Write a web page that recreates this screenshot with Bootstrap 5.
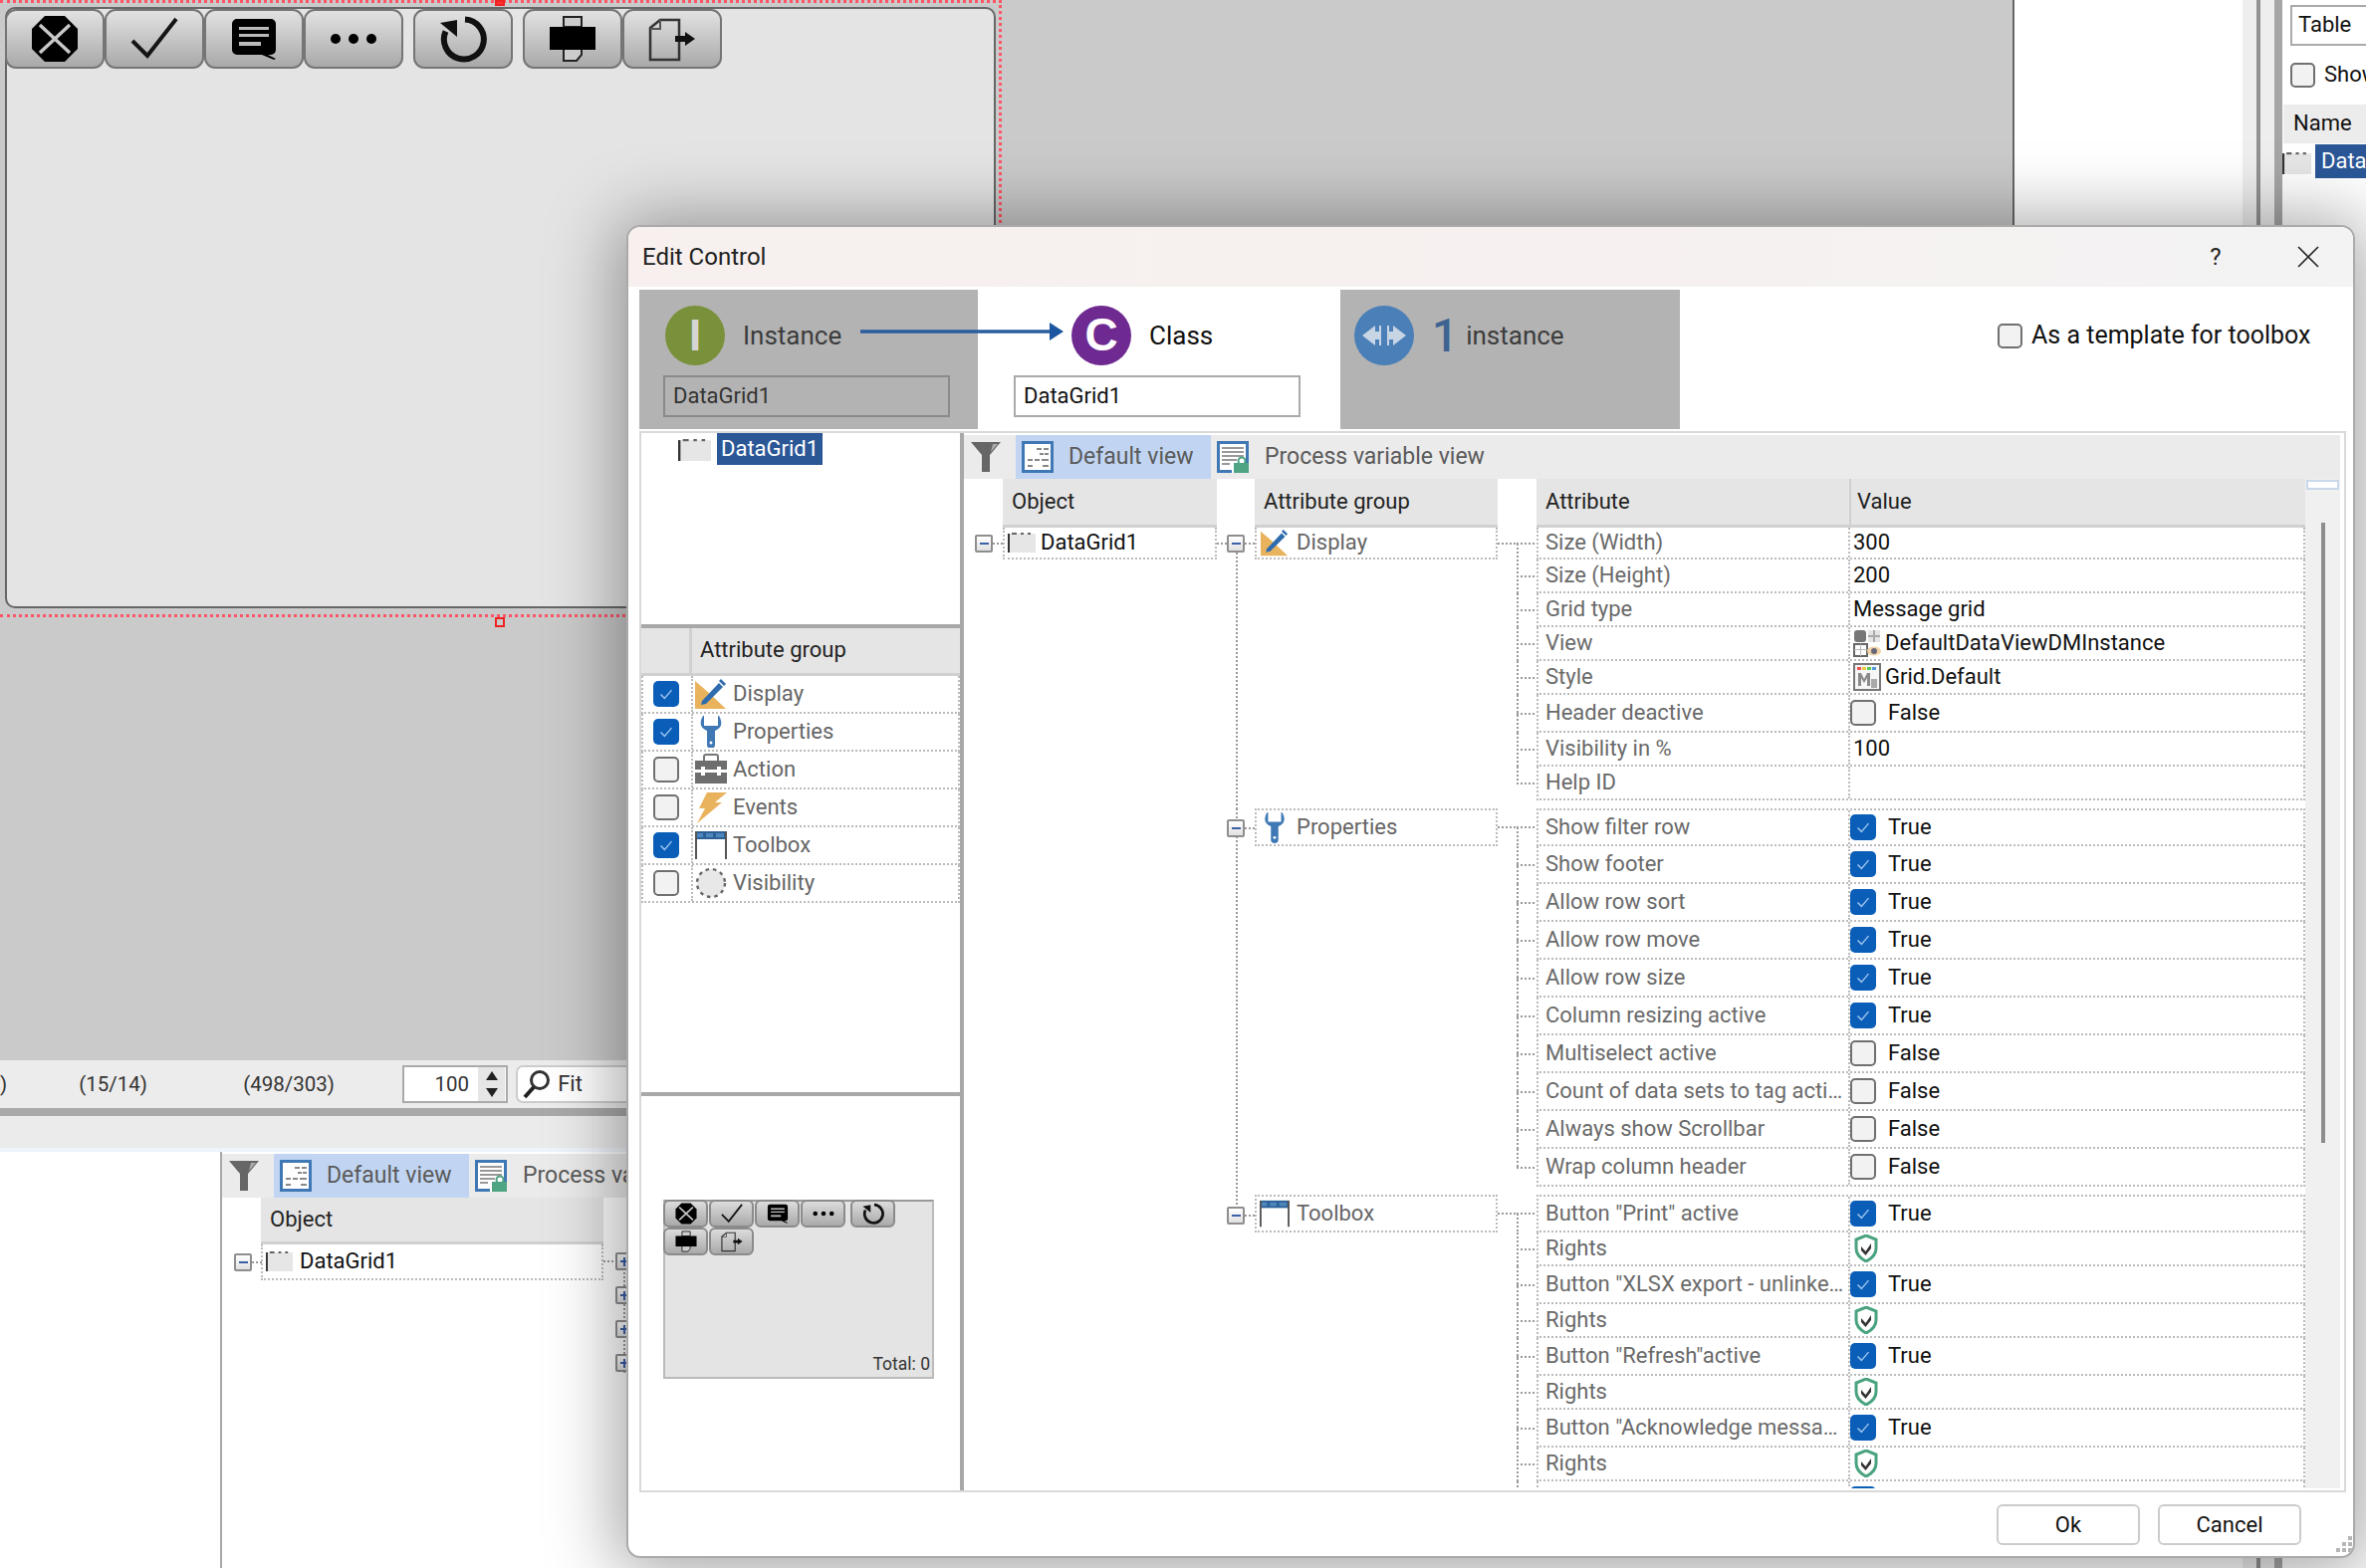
<!doctype html>
<html lang="en"><head><meta charset="utf-8"><title>Edit Control</title>
<link href="https://cdn.jsdelivr.net/npm/bootstrap@5.3.0/dist/css/bootstrap.min.css" rel="stylesheet">
<style>
html,body{margin:0;height:1575px;overflow:hidden;background:#fff}
body{width:2376px;font-family:Roboto,"Liberation Sans",sans-serif;font-size:22px;color:#111;line-height:1.2}
svg{display:block;flex:none}
.app-shell{height:1575px}
.left-stack{width:2252px;flex:none}
.top-area{height:1065px;flex:none}
.canvas-area{width:2023px;background:#cacaca;border-right:2px solid #666;flex:none}
.mid-pane{flex:1;background:#fff}
.sel-frame{width:1006px;height:620px;padding:4px 3px 6px 5px;border-top:3px dotted #f56;border-right:3px dotted #f56;border-bottom:3px dotted #f56;position:relative}
.handle{position:absolute;width:10px;height:10px;border:2px solid #e22;left:497px}
.handle-top{top:-3px;background:#f33;height:6px}.handle-bottom{bottom:-13px}
.hmi-grid{height:100%;background:#e4e4e4;border:2px solid #666;border-radius:10px}
.tbar-row{margin-left:-2px}
.tbar-btn{width:100px;height:60px;border:2px solid #757575;border-radius:11px;background:linear-gradient(#e2e2e2,#a9a9a9);display:flex;align-items:center;justify-content:center}
.tbar-btn.gap-left{margin-left:10px}
.mini-btn{width:45px;height:28px;border:2px solid #8b8b8b;border-radius:6px;background:linear-gradient(#dcdcdc,#a9a9a9);display:flex;align-items:center;justify-content:center}
.grip-pane{width:40px;flex:none;display:flex}
.grip-a{width:14px;background:#eee}.grip-line{width:4px;background:#929292}.grip-b{width:14px;background:#eee}.grip-c{width:8px;background:#a6a6a6}
.side-pane{flex:1;background:#fff;overflow:hidden;padding:5px 0 0 0;white-space:nowrap}
.table-field{margin-left:8px;height:41px;width:200px;border:2px solid #aaa;padding:0 6px;display:flex;align-items:center}
.show-row{margin:17px 0 0 8px;height:25px;gap:9px}
.win-check{width:25px;height:25px;border:2px solid #707070;border-radius:5px;background:#f2f2f2;flex:none}
.side-head{margin:17px 0 0 1px;height:39px;background:#ececec;padding:0 10px;display:flex;align-items:center}
.side-row{height:44px;margin-top:1px}
.side-ic{margin-top:8px}
.sel-text{background:#2b5797;color:#fff;padding:4px 6px}
.status-strip{height:48px;background:#ececec;font-size:20.5px;color:#333;flex:none}
.status-num{width:70px;margin-left:72px}
.status-num2{width:94px;margin-left:95px}
.spin-box{width:106px;height:38px;margin-left:66px;background:#fff;border:2px solid #aaa;justify-content:flex-end}
.spin-btns{width:27px;height:34px;margin-left:9px;margin-right:1px;background:#e6e6e6;display:flex;flex-direction:column;justify-content:space-around;align-items:center}
.fit-btn{width:200px;height:38px;margin-left:8px;background:#fff;border:2px solid #ccc;border-radius:7px;padding-left:4px;gap:6px;font-size:22px}
.dark-bar{height:8px;background:#a9a9a9;flex:none}
.light-strip{height:32px;background:#ebebeb;flex:none}
.blue-line{height:4px;background:#eef4fb;flex:none}
.lower-area{flex:1;background:#fff;min-height:0}
.lower-left{width:221px;flex:none}
.lower-main{flex:1;border-left:2px solid #a8a8a8;padding-top:2px}
.view-bar{height:44px;background:#ebebeb;color:#5a5a5a;font-size:23px;flex:none}
.filter-slot{width:52px;padding-left:7px;flex:none}
.view-active{background:#c1d5f2;width:196px;flex:none}
.view-item{height:100%;padding-left:6px;gap:15px}
.view-plain{padding-left:6px;gap:16px;white-space:nowrap}
.grid-head{background:#e5e5e5;border-bottom:3px solid #d0d0d0;padding-left:9px;display:flex;align-items:center;height:49px;color:#222;flex:none}
.lg-head{width:344px;margin-left:39px;height:47px}
.lg-gut{width:39px;flex:none;padding:9px 0 0 12px;display:flex;align-items:flex-start}
.obj-row{width:344px;height:36px;border:2px dotted #bbb;border-top:0;padding-left:3px;gap:7px;flex:none}
.xbox{width:18px;height:18px;border:2px solid #8e8e8e;border-radius:2px;background:linear-gradient(#fff,#e0e0e0);display:flex;align-items:center;justify-content:center;flex:none;position:relative}
.xbox::before{content:"";width:9px;height:2px;background:#3c5fa8}
.plus-box::after{content:"";position:absolute;width:2px;height:9px;background:#3c5fa8}
.tick{width:10px;height:2px;margin-top:8px;flex:none;background:repeating-linear-gradient(to right,#9a9a9a 0 2px,transparent 2px 4px)}
.lower-boxes{width:32px;padding:8px 0 0 0;flex:none}
.lower-stack{display:flex;flex-direction:column;gap:16px;height:121px;margin-left:2px;background:repeating-linear-gradient(to bottom,#9a9a9a 0 2px,transparent 2px 4px) 8px 0/2px 100% no-repeat}
.dialog-win{position:absolute;left:629px;top:226px;width:1736px;height:1339px;background:#fff;border:2px solid #aaa;border-radius:14px;box-shadow:0 4px 70px 10px rgba(0,0,0,.36);overflow:hidden;display:flex;flex-direction:column}
.dialog-title{height:60px;background:linear-gradient(90deg,#f7f0ee 0,#f6f1f0 60%,#f3f3f3 100%);padding-left:14px;font-size:24px;color:#222;flex:none}
.ctrl-help{width:96px;justify-content:center}
.ctrl-close{width:90px;justify-content:center}
.head-band{height:143px;padding:3px 0 0 11px;flex:none}
.band-tile{width:340px;height:140px;background:#b3b3b3;padding:16px 0 0 26px;flex:none}
.band-class{width:364px;padding:16px 0 0 36px;position:relative;flex:none}
.band-class-top{margin-left:58px}
.band-count{width:341px;height:140px;background:#b3b3b3;padding:16px 0 0 14px;flex:none}
.round-badge{width:60px;height:60px;border-radius:50%;color:#fff;display:flex;align-items:center;justify-content:center;flex:none;font-family:"Liberation Sans",sans-serif;font-weight:700}
.rb-inst{background:#7a913b;color:#d5d5d5;font-size:44px}.rb-class{background:#6f2a91;font-size:46px}.rb-map{background:#4a7fb8}
.band-label{font-size:26px;margin-left:18px;color:#3c3c3c;padding-top:1px}
.band-dark{color:#111}
.band-one{font-size:46px;color:#3d6391;font-weight:500;margin:0 8px 0 18px;line-height:1}
.band-field{width:288px;height:42px;margin:10px 0 0 -2px;border:2px solid #8a8a8a;padding:0 8px;color:#333;display:flex;align-items:center}
.band-field-w{border-color:#aaa;background:#fff;color:#111;margin-left:0}
.band-arrow{position:absolute;left:-118px;top:32px}
.tpl-check{margin-left:319px;margin-top:31px;gap:9px;font-size:25px;color:#111;white-space:nowrap}
.tpl-box{width:25px;height:25px;border:2px solid #707070;border-radius:5px;background:#f2f2f2;flex:none}
.main-frame{height:1066px;margin:2px 7px 0 11px;border:2px solid #d9d9d9;flex:none}
.left-col{width:324px;border-right:4px solid #a8a8a8;flex:none}
.tree-pane{height:192px;padding-left:37px;border-bottom:4px solid #a8a8a8;box-sizing:content-box;flex:none}
.tree-pane .sel-text{margin-left:6px;height:32px;display:flex;align-items:center;padding:0 4px}
.tree-ic{margin-top:6px}
.attr-table{height:466px;border-bottom:4px solid #a8a8a8;box-sizing:content-box;flex:none}
.attr-head{height:48px;background:#e5e5e5;border-bottom:3px solid #d0d0d0;color:#222}
.attr-headcol{width:51px;border-right:3px solid #d0d0d0;height:100%}
.attr-row{height:38px;border:2px dotted #bbb;border-top:0;color:#666}
.attr-cbcell{width:50px;padding-left:10px;border-right:2px dotted #bbb;height:100%}
.attr-cell{gap:6px;padding-left:2px}
.cb-on,.cb-off{width:26px;height:26px;border-radius:5px;flex:none}
.cb-off{border:2px solid #707070;background:#f2f2f2}
.cb-on{background:#0a5eb8;display:flex;align-items:center;justify-content:center}
.preview-wrap{flex:1;padding:104px 0 0 22px}
.preview-box{width:272px;height:180px;background:#e4e4e4;border:2px solid #bbb;border-top-color:#999;position:relative;font-size:17.5px;color:#333}
.preview-row{display:flex;gap:1px;margin-left:-2px}
.preview-row-top{margin-top:-2px}
.preview-total{position:absolute;right:2px;bottom:2px}
.right-col{flex:1;min-width:0;padding-top:2px;overflow:hidden}
.dlg-viewbar{width:1382px}
.tree-grid{height:1014px;overflow:hidden}
.col-gut{width:39px;flex:none}
.head-gap{height:49px}
.col-gut-inner{padding:7px 0 0 11px;display:flex;align-items:flex-start}
.col-obj{width:215px;flex:none}
.cell-w{width:215px!important;gap:5px!important}
.grp-area{flex:none}
.sgroup{display:flex;align-items:stretch}
.gut2{width:38px;flex:none;display:flex;align-items:flex-start;background-image:repeating-linear-gradient(to bottom,#9a9a9a 0 2px,transparent 2px 4px);background-size:2px 100%;background-repeat:no-repeat;background-position:19px 0}
.gut-a{padding-top:7px;background-position:19px 25px}
.gut-b{padding:11px 0 0 10px}
.gut-c{padding:12px 0 0 10px;background-size:2px 12px}
.head-spacer{width:38px;flex:none}
.col-grp{width:244px}
.col-gut3{width:39px;flex:none}
.col-attr{width:314px}
.col-val{width:458px;border-left:2px solid #d0d0d0;padding-left:6px}
.scell{width:244px;height:38px;border:2px dotted #bbb;color:#666;padding-left:3px;gap:7px;flex:none}
.scell-first{height:32px;border-top:0}
.text-dark-cell{color:#111}
.sg-link{width:39px;flex:none;display:flex}
.lk-h{width:19px;flex:none;height:38px;background-image:repeating-linear-gradient(to right,#9a9a9a 0 2px,transparent 2px 4px);background-size:100% 2px;background-repeat:no-repeat;background-position:0 50%}
.lk-h32{height:32px}
.lk-wrap{width:20px;flex:none;display:flex;flex-direction:column}
.lk{flex:none;background-image:repeating-linear-gradient(to right,#9a9a9a 0 2px,transparent 2px 4px),repeating-linear-gradient(to bottom,#9a9a9a 0 2px,transparent 2px 4px);background-size:100% 2px,2px 100%;background-repeat:no-repeat;background-position:0 50%,0 0}
.lk-first{background-size:100% 2px,2px 50%;background-position:0 50%,0 100%}
.lk-last{background-size:100% 2px,2px 50%;background-position:0 50%,0 0}
.h32{height:32px}.h34{height:34px}.h38{height:38px}
.rows{flex:none;width:772px;margin-bottom:8px}
.rows-c{margin-bottom:0}
.prow{display:flex;height:34px;border:2px dotted #bbb;border-top:0;align-items:center;white-space:nowrap}
.prow.r32{height:32px}
.prow.r38{height:38px}
.prow.r-first{border-top:2px dotted #bbb}
.pname{width:313px;flex:none;padding-left:7px;color:#6a6a6a;overflow:hidden;height:100%;display:flex;align-items:center;border-right:2px dotted #bbb}
.pname-clip{display:block;line-height:32px;overflow:hidden;text-overflow:ellipsis;white-space:nowrap}
.pval{flex:1;padding-left:0;display:flex;align-items:center;gap:12px;color:#111;height:100%}
.pval.txt{padding-left:3px;gap:4px}
.pval.shield{padding-left:2px}
.col-scroll{width:35px;flex:none;background:#f0f0f0;margin-left:0;height:1014px}
.thumb-top{height:10px;background:#fff;border:2px solid #c9d8ea;margin:1px 1px 0}
.thumb-line{width:4px;height:623px;background:#8d8d8d;margin:33px 0 0 16px}
.dlg-footer{flex:1;padding:12px 52px 0 0;gap:18px;position:relative}
.dlg-btn{width:144px;height:41px;background:#fff;border:2px solid #ccc;border-radius:6px;color:#111;font-size:22px;padding:0;--bs-btn-hover-bg:#fff}
.size-grip{position:absolute;right:0;bottom:2px}
</style></head><body>
<svg width="0" height="0" style="position:absolute"><defs>
<symbol id="i-x" viewBox="0 0 48 48"><path d="M14 1h20l13 13v20L34 47H14L1 34V14z" fill="#000"/><path d="M9 10l30 28M39 10L9 38" stroke="#c8c8c8" stroke-width="3.500"/></symbol>
<symbol id="i-check" viewBox="0 0 48 48"><path d="M2 26l15 15L46 4" fill="none" stroke="#151515" stroke-width="4"/></symbol>
<symbol id="i-msg" viewBox="0 0 48 48"><path d="M7 4h34a5 5 0 0 1 5 5v26a5 5 0 0 1-5 5h-3l8 4-2 1-12-5H7a5 5 0 0 1-5-5V9a5 5 0 0 1 5-5z" fill="#000"/><path d="M9 12h30v3H9zM9 19h30v3H9zM9 27h22v4H9z" fill="#bbb"/></symbol>
<symbol id="i-dots" viewBox="0 0 48 48"><circle cx="6" cy="24" r="5"/><circle cx="24" cy="24" r="5"/><circle cx="42" cy="24" r="5"/></symbol>
<symbol id="i-refresh" viewBox="0 0 48 48"><path d="M26 4.500a20 20 0 1 1-19.500 12" fill="none" stroke="#111" stroke-width="6"/><path d="M1 8l17-3v17z" fill="#111"/></symbol>
<symbol id="i-print" viewBox="0 0 48 48"><path d="M15 2h18v10H15zM15 33h18v7l-5 6H15z" fill="#ccc" stroke="#222" stroke-width="2"/><path d="M1 12h46v23H1z" fill="#000"/></symbol>
<symbol id="i-export" viewBox="0 0 48 48"><path d="M2 13L12 5h19v40H2z" fill="none" stroke="#333" stroke-width="2.500"/><path d="M12 5v9H2" fill="none" stroke="#555" stroke-width="2"/><path d="M27 21h10v-4l10 7-10 7v-4H27z" fill="#111"/></symbol>
<symbol id="i-table" viewBox="0 0 28 20" preserveAspectRatio="none"><rect x="1" y="1" width="27" height="19" fill="#e6e6e6"/><path d="M0 1h2v19H0z" fill="#333"/><path d="M4 0h5v2H4zM13 0h3v2h-3zM20 0h3v2h-3z" fill="#666"/></symbol>
<symbol id="i-filter" viewBox="0 0 30 30"><path d="M0 0h30L19 13v17h-8V13z" fill="#666"/><path d="M22 2h5l-7 8z" fill="#aaa"/></symbol>
<symbol id="i-doc" viewBox="0 0 32 32"><rect x="1.500" y="1.500" width="29" height="29" fill="#fff" stroke="#3f78b5" stroke-width="3"/><path d="M15 7h5v2h-5zM22 7h5v2h-5zM18 12h4v2h-4zM23 12h4v2h-4zM6 18h5v2H6zM13 18h5v2h-5zM20 18h7v2h-7zM6 24h5v2H6zM21 24h6v2h-6z" fill="#888"/></symbol>
<symbol id="i-proc" viewBox="0 0 32 32"><rect x="1.500" y="1.500" width="29" height="29" fill="#fff" stroke="#3f78b5" stroke-width="3"/><path d="M5 6h22v2H5zM5 10h22v2H5zM5 14h22v2H5zM5 18h15v2H5zM5 22h8v2H5z" fill="#999"/><path d="M15 22h17v10H15z" fill="#fff"/><path d="M17 22h15v10H17z" fill="#4ea583"/><circle cx="25" cy="20" r="3.500" fill="none" stroke="#4ea583" stroke-width="2"/></symbol>
<symbol id="i-display" viewBox="0 0 32 32"><path d="M0 3l14 12L31 31H0z" fill="#e9b35e"/><path d="M7 23L24 5l4 4-17 17-5 1z" fill="#2f6cae"/><path d="M26 1l5 5-2 2-5-5z" fill="#2f6cae"/></symbol>
<symbol id="i-wrench" viewBox="0 0 32 32"><path d="M8 0h1v10h14V0h1c4 7 3 12-4 15v14a4 4 0 0 1-8 0V15C5 12 4 7 8 0z" fill="#3f78b5"/><circle cx="16" cy="27" r="1.500" fill="#fff"/></symbol>
<symbol id="i-brief" viewBox="0 0 32 32"><path d="M9 7V3a2 2 0 0 1 2-2h10a2 2 0 0 1 2 2v4" fill="none" stroke="#777" stroke-width="2"/><path d="M0 7h32v9H0zM0 19h32v11H0z" fill="#6e6e6e"/><path d="M0 16h32v3H0z" fill="#fff"/><path d="M6 13h4v9H6zM22 13h4v9h-4z" fill="#fff"/></symbol>
<symbol id="i-bolt" viewBox="0 0 32 32"><path d="M12 1h20L20 11h7L2 32l8-15H4z" fill="#e9b35e"/></symbol>
<symbol id="i-tool" viewBox="0 0 32 32"><path d="M0 2h32v8H0z" fill="#2d6096"/><path d="M2 4h6v4H2zM11 4h7v4h-7zM21 4h8v4h-8z" fill="#4c86bd"/><path d="M0 2h2v28H0zM30 2h2v28h-2z" fill="#555"/></symbol>
<symbol id="i-vis" viewBox="0 0 32 32"><circle cx="16" cy="16" r="14" fill="#e8e8e8" stroke="#666" stroke-width="2.400" stroke-dasharray="3.500 4"/></symbol>
<symbol id="i-shield" viewBox="0 0 28 28"><path d="M14 1l10 4v9c0 6-4 10-10 13C8 24 4 20 4 14V5z" fill="#fff" stroke="#49a37f" stroke-width="3"/><path d="M9 12l4.500 5L19 9v5l-5.500 7L9 16z" fill="#333"/></symbol>
<symbol id="i-view" viewBox="0 0 28 28"><rect x="1" y="1" width="12" height="12" rx="3" fill="#777"/><path d="M15 1h12v12H15z" fill="#e4e4e4"/><path d="M20 1h2v12h-2zM15 6h12v2H15z" fill="#aaa"/><path d="M1 15h13v12H1z" fill="#fff" stroke="#666" stroke-width="2"/><path d="M7 15h1v12H7zM1 20h13v1H1z" fill="#bbb"/><ellipse cx="21" cy="22" rx="7" ry="4.500" fill="#f0d4a8"/><circle cx="21" cy="22" r="3" fill="#667"/></symbol>
<symbol id="i-style" viewBox="0 0 28 28"><rect x="1" y="1" width="26" height="26" fill="#f6f6f6" stroke="#777" stroke-width="2"/><path d="M4 4h4v3H4z" fill="#e55"/><path d="M9 4h4v3H9z" fill="#ec4"/><path d="M14 4h4v3h-4z" fill="#5c5"/><path d="M19 4h4v3h-4z" fill="#59d"/><path d="M5 10h3v13H5zM14 10h3v13h-3zM8 10l3 6 3-6v5l-3 5-3-5z" fill="#8a8a8a"/><path d="M18 16h6v9h-6z" fill="#aaa"/></symbol>
<symbol id="i-check-w" viewBox="0 0 12 10"><path d="M1 5l3.500 3.500L11 1" fill="none" stroke="#9cc4ee" stroke-width="1.300"/></symbol>
<symbol id="i-mag" viewBox="0 0 30 30"><circle cx="18" cy="11" r="8.500" fill="#fff" stroke="#333" stroke-width="3"/><path d="M12 18L3 28" stroke="#222" stroke-width="4"/></symbol>
</defs></svg>

<div class="app-shell d-flex">
 <div class="left-stack d-flex flex-column">
  <div class="top-area d-flex">
   <div class="canvas-area">
    <div class="sel-frame">
     <span class="handle handle-top"></span><span class="handle handle-bottom"></span>
     <div class="hmi-grid">
      <div class="d-flex tbar-row">
       <div class="tbar-btn"><svg width="48" height="48"><use href="#i-x"/></svg></div>
       <div class="tbar-btn"><svg width="48" height="48"><use href="#i-check"/></svg></div>
       <div class="tbar-btn"><svg width="48" height="48"><use href="#i-msg"/></svg></div>
       <div class="tbar-btn"><svg width="48" height="48"><use href="#i-dots"/></svg></div>
       <div class="tbar-btn gap-left"><svg width="48" height="48"><use href="#i-refresh"/></svg></div>
       <div class="tbar-btn gap-left"><svg width="48" height="48"><use href="#i-print"/></svg></div>
       <div class="tbar-btn"><svg width="48" height="48"><use href="#i-export"/></svg></div>
      </div>
     </div>
    </div>
   </div>
   <div class="mid-pane"></div>
  </div>
  <div class="status-strip d-flex align-items-center">
   <span>)</span><span class="status-num">(15/14)</span><span class="status-num2">(498/303)</span>
   <div class="spin-box d-flex align-items-center">100<div class="spin-btns"><svg width="12" height="9"><path d="M6 0l6 9H0z" fill="#222"/></svg><svg width="12" height="9"><path d="M0 0h12L6 9z" fill="#222"/></svg></div></div>
   <div class="fit-btn d-flex align-items-center"><svg width="30" height="30"><use href="#i-mag"/></svg>Fit</div>
  </div>
  <div class="dark-bar"></div>
  <div class="light-strip"></div>
  <div class="blue-line"></div>
  <div class="lower-area d-flex">
   <div class="lower-left"></div>
   <div class="lower-main d-flex flex-column">
    <div class="view-bar d-flex align-items-center">
     <div class="filter-slot"><svg width="30" height="30"><use href="#i-filter"/></svg></div>
     <div class="view-active view-item d-flex align-items-center"><svg width="32" height="32"><use href="#i-doc"/></svg>Default view</div>
     <div class="view-plain d-flex align-items-center"><svg width="32" height="32"><use href="#i-proc"/></svg>Process variable view</div>
    </div>
    <div class="d-flex"><div class="lg-head grid-head">Object</div></div>
    <div class="d-flex">
     <div class="lg-gut"><span class="xbox"></span><span class="tick"></span></div>
     <div class="obj-row d-flex align-items-center"><svg width="27" height="20"><use href="#i-table"/></svg>DataGrid1</div>
     <div class="lower-boxes d-flex"><span class="tick"></span><div class="lower-stack"><span class="xbox plus-box"></span><span class="xbox plus-box"></span><span class="xbox plus-box"></span><span class="xbox plus-box"></span></div></div>
    </div>
   </div>
  </div>
 </div>
 <div class="grip-pane"><div class="grip-a"></div><div class="grip-line"></div><div class="grip-b"></div><div class="grip-c"></div></div>
 <div class="side-pane">
  <div class="table-field">Table</div>
  <div class="show-row d-flex align-items-center"><span class="win-check"></span><span>Show</span></div>
  <div class="side-head">Name</div>
  <div class="side-row d-flex align-items-start"><svg class="side-ic" width="29" height="22"><use href="#i-table"/></svg><span class="sel-text ms-1">DataGrid1</span></div>
 </div>
</div>

<div class="dialog-win" role="dialog">
 <div class="dialog-title d-flex align-items-center justify-content-between">
  <span>Edit Control</span>
  <div class="d-flex align-items-center"><div class="ctrl-help d-flex">?</div><div class="ctrl-close d-flex"><svg width="22" height="22"><path d="M1 1l20 20M21 1L1 21" stroke="#222" stroke-width="1.600"/></svg></div></div>
 </div>
 <div class="head-band d-flex">
  <div class="band-tile">
   <div class="d-flex align-items-center"><span class="round-badge rb-inst">I</span><span class="band-label">Instance</span></div>
   <div class="band-field">DataGrid1</div>
  </div>
  <div class="band-class">
   <svg class="band-arrow" width="204" height="20"><path d="M0 10h192" stroke="#2a5d9e" stroke-width="3.500"/><path d="M190 1l14 9-14 9z" fill="#1c56a0"/></svg>
   <div class="d-flex align-items-center band-class-top"><span class="round-badge rb-class">C</span><span class="band-label band-dark">Class</span></div>
   <div class="band-field band-field-w">DataGrid1</div>
  </div>
  <div class="band-count">
   <div class="d-flex align-items-center"><span class="round-badge rb-map"><svg width="44" height="24"><path d="M0 12l13-10v6h4V2h2v20h-2v-6h-4v6zM44 12L31 2v6h-4V2h-2v20h2v-6h4v6z" fill="#c8d5e5"/></svg></span><span class="band-one">1</span><span class="band-label ms-0">instance</span></div>
  </div>
  <div class="tpl-check d-flex align-items-center align-self-start"><span class="tpl-box"></span><span>As a template for toolbox</span></div>
 </div>
 <div class="main-frame d-flex">
  <div class="left-col d-flex flex-column">
   <div class="tree-pane d-flex align-items-start"><svg class="tree-ic" width="33" height="22"><use href="#i-table"/></svg><span class="sel-text">DataGrid1</span></div>
   <div class="attr-table">
    <div class="attr-head d-flex align-items-center"><div class="attr-headcol"></div><span class="ps-2">Attribute group</span></div>
    <div class="attr-row d-flex align-items-center"><div class="attr-cbcell d-flex align-items-center"><span class="cb-on"><svg width="14" height="11"><use href="#i-check-w"/></svg></span></div><div class="attr-cell d-flex align-items-center"><svg width="32" height="32"><use href="#i-display"/></svg>Display</div></div>
    <div class="attr-row d-flex align-items-center"><div class="attr-cbcell d-flex align-items-center"><span class="cb-on"><svg width="14" height="11"><use href="#i-check-w"/></svg></span></div><div class="attr-cell d-flex align-items-center"><svg width="32" height="32"><use href="#i-wrench"/></svg>Properties</div></div>
    <div class="attr-row d-flex align-items-center"><div class="attr-cbcell d-flex align-items-center"><span class="cb-off"></span></div><div class="attr-cell d-flex align-items-center"><svg width="32" height="32"><use href="#i-brief"/></svg>Action</div></div>
    <div class="attr-row d-flex align-items-center"><div class="attr-cbcell d-flex align-items-center"><span class="cb-off"></span></div><div class="attr-cell d-flex align-items-center"><svg width="32" height="32"><use href="#i-bolt"/></svg>Events</div></div>
    <div class="attr-row d-flex align-items-center"><div class="attr-cbcell d-flex align-items-center"><span class="cb-on"><svg width="14" height="11"><use href="#i-check-w"/></svg></span></div><div class="attr-cell d-flex align-items-center"><svg width="32" height="32"><use href="#i-tool"/></svg>Toolbox</div></div>
    <div class="attr-row d-flex align-items-center"><div class="attr-cbcell d-flex align-items-center"><span class="cb-off"></span></div><div class="attr-cell d-flex align-items-center"><svg width="32" height="32"><use href="#i-vis"/></svg>Visibility</div></div>
   </div>
   <div class="preview-wrap">
    <div class="preview-box">
     <div class="preview-row preview-row-top">
      <div class="mini-btn"><svg width="22" height="22"><use href="#i-x"/></svg></div>
      <div class="mini-btn"><svg width="22" height="22"><use href="#i-check"/></svg></div>
      <div class="mini-btn"><svg width="22" height="22"><use href="#i-msg"/></svg></div>
      <div class="mini-btn"><svg width="22" height="22"><use href="#i-dots"/></svg></div>
      <div class="mini-btn ms-1"><svg width="22" height="22"><use href="#i-refresh"/></svg></div>
     </div>
     <div class="preview-row">
      <div class="mini-btn"><svg width="22" height="22"><use href="#i-print"/></svg></div>
      <div class="mini-btn"><svg width="22" height="22"><use href="#i-export"/></svg></div>
     </div>
     <span class="preview-total">Total: 0</span>
    </div>
   </div>
  </div>
  <div class="right-col">
   <div class="view-bar dlg-viewbar d-flex align-items-center">
    <div class="filter-slot"><svg width="30" height="30"><use href="#i-filter"/></svg></div>
    <div class="view-active view-item d-flex align-items-center"><svg width="32" height="32"><use href="#i-doc"/></svg>Default view</div>
    <div class="view-plain d-flex align-items-center"><svg width="32" height="32"><use href="#i-proc"/></svg>Process variable view</div>
   </div>
   <div class="tree-grid d-flex">
    <div class="col-gut">
     <div class="head-gap"></div>
     <div class="col-gut-inner"><span class="xbox"></span><span class="tick"></span></div>
    </div>
    <div class="col-obj">
     <div class="grid-head">Object</div>
     <div class="scell scell-first cell-w d-flex align-items-center"><svg width="28" height="20"><use href="#i-table"/></svg><span class="text-dark-cell">DataGrid1</span></div>
    </div>
    <div class="grp-area">
     <div class="d-flex">
      <div class="head-spacer"></div>
      <div class="col-grp grid-head">Attribute group</div><div class="col-gut3"></div>
      <div class="col-attr grid-head">Attribute</div><div class="col-val grid-head">Value</div>
     </div>

     <div class="sgroup">
      <div class="gut2 gut-a"><span class="tick"></span><span class="xbox"></span><span class="tick"></span></div>
      <div class="scell scell-first d-flex align-items-center"><svg width="30" height="28"><use href="#i-display"/></svg>Display</div>
      <div class="sg-link"><div class="lk-h lk-h32"></div><div class="lk-wrap"><div class="lk lk-first h32"></div><div class="lk h34"></div><div class="lk h34"></div><div class="lk h34"></div><div class="lk h34"></div><div class="lk h38"></div><div class="lk h34"></div><div class="lk lk-last h34"></div></div></div>
      <div class="rows">
       <div class="prow r32"><span class="pname">Size (Width)</span><span class="pval txt">300</span></div>
       <div class="prow"><span class="pname">Size (Height)</span><span class="pval txt">200</span></div>
       <div class="prow"><span class="pname">Grid type</span><span class="pval txt">Message grid</span></div>
       <div class="prow"><span class="pname">View</span><span class="pval txt"><svg width="28" height="28"><use href="#i-view"/></svg>DefaultDataViewDMInstance</span></div>
       <div class="prow"><span class="pname">Style</span><span class="pval txt"><svg width="28" height="28"><use href="#i-style"/></svg>Grid.Default</span></div>
       <div class="prow r38"><span class="pname">Header deactive</span><span class="pval"><span class="cb-off"></span>False</span></div>
       <div class="prow"><span class="pname">Visibility in %</span><span class="pval txt">100</span></div>
       <div class="prow"><span class="pname">Help ID</span><span class="pval"></span></div>
      </div>
     </div>

     <div class="sgroup">
      <div class="gut2 gut-b"><span class="xbox"></span><span class="tick"></span></div>
      <div class="scell d-flex align-items-center"><svg width="30" height="32"><use href="#i-wrench"/></svg>Properties</div>
      <div class="sg-link"><div class="lk-h"></div><div class="lk-wrap"><div class="lk lk-first h38"></div><div class="lk h38"></div><div class="lk h38"></div><div class="lk h38"></div><div class="lk h38"></div><div class="lk h38"></div><div class="lk h38"></div><div class="lk h38"></div><div class="lk h38"></div><div class="lk lk-last h38"></div></div></div>
      <div class="rows">
       <div class="prow r38 r-first"><span class="pname">Show filter row</span><span class="pval"><span class="cb-on"><svg width="14" height="11"><use href="#i-check-w"/></svg></span>True</span></div>
       <div class="prow r38"><span class="pname">Show footer</span><span class="pval"><span class="cb-on"><svg width="14" height="11"><use href="#i-check-w"/></svg></span>True</span></div>
       <div class="prow r38"><span class="pname">Allow row sort</span><span class="pval"><span class="cb-on"><svg width="14" height="11"><use href="#i-check-w"/></svg></span>True</span></div>
       <div class="prow r38"><span class="pname">Allow row move</span><span class="pval"><span class="cb-on"><svg width="14" height="11"><use href="#i-check-w"/></svg></span>True</span></div>
       <div class="prow r38"><span class="pname">Allow row size</span><span class="pval"><span class="cb-on"><svg width="14" height="11"><use href="#i-check-w"/></svg></span>True</span></div>
       <div class="prow r38"><span class="pname">Column resizing active</span><span class="pval"><span class="cb-on"><svg width="14" height="11"><use href="#i-check-w"/></svg></span>True</span></div>
       <div class="prow r38"><span class="pname">Multiselect active</span><span class="pval"><span class="cb-off"></span>False</span></div>
       <div class="prow r38"><span class="pname"><span class="pname-clip">Count of data sets to tag activation</span></span><span class="pval"><span class="cb-off"></span>False</span></div>
       <div class="prow r38"><span class="pname">Always show Scrollbar</span><span class="pval"><span class="cb-off"></span>False</span></div>
       <div class="prow r38"><span class="pname">Wrap column header</span><span class="pval"><span class="cb-off"></span>False</span></div>
      </div>
     </div>

     <div class="sgroup">
      <div class="gut2 gut-c"><span class="xbox"></span><span class="tick"></span></div>
      <div class="scell d-flex align-items-center"><svg width="30" height="30"><use href="#i-tool"/></svg>Toolbox</div>
      <div class="sg-link"><div class="lk-h"></div><div class="lk-wrap"><div class="lk lk-first h38"></div><div class="lk h34"></div><div class="lk h38"></div><div class="lk h34"></div><div class="lk h38"></div><div class="lk h34"></div><div class="lk h38"></div><div class="lk h34"></div><div class="lk h38"></div></div></div>
      <div class="rows rows-c">
       <div class="prow r38 r-first"><span class="pname">Button "Print" active</span><span class="pval"><span class="cb-on"><svg width="14" height="11"><use href="#i-check-w"/></svg></span>True</span></div>
       <div class="prow"><span class="pname">Rights</span><span class="pval shield"><svg width="28" height="28"><use href="#i-shield"/></svg></span></div>
       <div class="prow r38"><span class="pname"><span class="pname-clip">Button "XLSX export - unlinked data"</span></span><span class="pval"><span class="cb-on"><svg width="14" height="11"><use href="#i-check-w"/></svg></span>True</span></div>
       <div class="prow"><span class="pname">Rights</span><span class="pval shield"><svg width="28" height="28"><use href="#i-shield"/></svg></span></div>
       <div class="prow r38"><span class="pname">Button "Refresh"active</span><span class="pval"><span class="cb-on"><svg width="14" height="11"><use href="#i-check-w"/></svg></span>True</span></div>
       <div class="prow"><span class="pname">Rights</span><span class="pval shield"><svg width="28" height="28"><use href="#i-shield"/></svg></span></div>
       <div class="prow r38"><span class="pname"><span class="pname-clip">Button "Acknowledge messages"</span></span><span class="pval"><span class="cb-on"><svg width="14" height="11"><use href="#i-check-w"/></svg></span>True</span></div>
       <div class="prow"><span class="pname">Rights</span><span class="pval shield"><svg width="28" height="28"><use href="#i-shield"/></svg></span></div>
       <div class="prow r38"><span class="pname"></span><span class="pval"><span class="cb-on"></span></span></div>
      </div>
     </div>
    </div>
    <div class="col-scroll"><div class="thumb-top"></div><div class="thumb-line"></div></div>
   </div>
  </div>
 </div>
 <div class="dlg-footer d-flex justify-content-end align-items-start">
  <button class="btn dlg-btn" type="button">Ok</button><button class="btn dlg-btn" type="button">Cancel</button>
  <svg class="size-grip" width="20" height="18"><path d="M15 0h4v4h-4zM15 6h4v4h-4zM9 6h4v4H9zM15 12h4v4h-4zM9 12h4v4H9zM3 12h4v4H3z" fill="#b5b5b5"/></svg>
 </div>
</div>
<script src="https://cdn.jsdelivr.net/npm/bootstrap@5.3.0/dist/js/bootstrap.bundle.min.js"></script>
</body></html>
